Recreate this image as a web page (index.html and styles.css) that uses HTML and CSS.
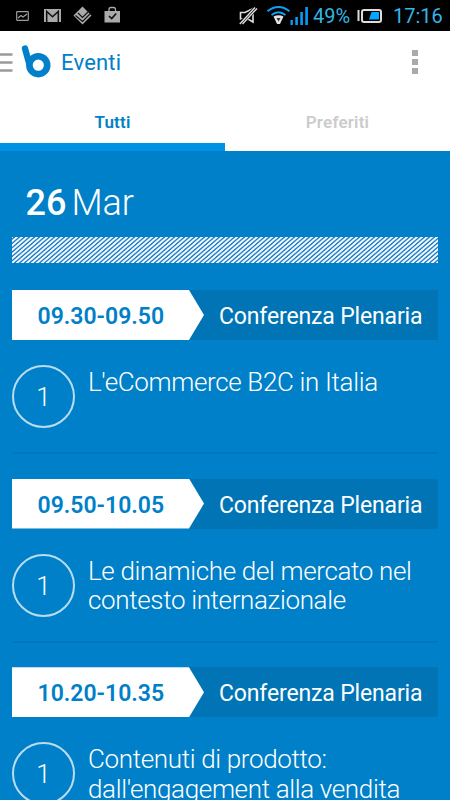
FILE: index.html
```
<!DOCTYPE html>
<html lang="it">
<head>
<meta charset="utf-8">
<title>Eventi</title>
<link rel="stylesheet" href="styles.css">
</head>
<body>
<div class="status">
  <svg class="status-left" width="125" height="31" viewBox="0 0 125 31">
    <g fill="none" stroke="#9d9d9d">
      <rect x="16.7" y="11.7" width="11.6" height="8.600" rx=".5" stroke-width="1.200"/>
      <path d="M18 18l3-2.500 2 1.500 4-3" stroke-width="1.300"/>
    </g>
    <path fill="#aaa" d="M44 9h17v13H44z"/>
    <path d="M46.700 22V11.500l5.800 5.200 5.800-5.200V22" fill="none" stroke="#111" stroke-width="1.500"/>
    <path fill="#aaa" d="M82.500 6.500l9 9-9 9-9-9z"/>
    <path d="M78 13l4.500 4.500L89.500 10.500M75.500 15.500l7 6L90 14" fill="none" stroke="#111" stroke-width="1.200"/>
    <path fill="#aaa" d="M104.500 11h15.500v11.500h-15.500z"/>
    <path d="M109 11V9.500q0-2 2-2h2.500q2 0 2 2V11" fill="none" stroke="#aaa" stroke-width="1.300"/>
    <path d="M109 16l2.700 2.500 4.500-5" fill="none" stroke="#111" stroke-width="1.700"/>
  </svg>
  <div class="status-right">
    <svg width="72" height="31" viewBox="238 0 72 31">
      <path d="M240.500 12.500h4.500l8-4v13.500l-5-3h-7.500z" fill="none" stroke="#ddd" stroke-width="1.600"/>
      <path d="M240 24.500L256.500 7.500" stroke="#000" stroke-width="5"/>
      <path d="M239.800 24L255 7.500M242.500 24L257 8.500" stroke="#ddd" stroke-width="1.400"/>
      <path d="M267.500 11.300q11-8.500 22 0M271.500 15q7-5.500 14 0" fill="none" stroke="#0aa0f5" stroke-width="2"/>
      <path d="M273.500 16.500q5-2.500 10 0l-3.500 7.500h-3z" fill="#e2e2e2"/>
      <path d="M276.500 18h4l-2 3.500z" fill="#333"/>
      <path d="M290.500 20h2.400v5h-2.400zM295.300 17h2.600v8h-2.600zM300.300 12h2.600v13h-2.600zM305.300 7h2.600v18h-2.600z" fill="#0a9cf5"/>
    </svg>
    <span class="percent">49%</span>
    <svg width="26" height="31" viewBox="357 0 26 31">
      <path d="M358.500 10v11" stroke="#ddd" stroke-width="2"/>
      <rect x="362" y="10" width="19" height="12" rx="2" fill="none" stroke="#ddd" stroke-width="2"/>
      <path d="M371.500 12h7.500v7.500h-10z" fill="#00a8ff"/>
    </svg>
    <span class="clock">17:16</span>
  </div>
</div>
<header class="bar">
  <svg class="brand" width="54" height="62" viewBox="0 31 54 62">
    <path d="M0 54.500h12.500M0 62.500h12.500M0 70.500h12.500" stroke="#999" stroke-width="2.600"/>
    <path d="M25 48.500L29 63" stroke="#0080c8" stroke-width="6.400" stroke-linecap="round"/>
    <circle cx="38.300" cy="65.200" r="8.900" fill="none" stroke="#0080c8" stroke-width="6.600"/>
  </svg>
  <h1 class="title">Eventi</h1>
  <div class="more"><i></i><i></i><i></i></div>
</header>
<nav class="tabs">
  <div class="tab active">Tutti</div>
  <div class="tab">Preferiti</div>
</nav>
<main class="agenda">
  <h2 class="date"><b>26</b><span>Mar</span></h2>
  <svg class="hatch" width="426" height="26">
    <defs><pattern id="stripes" width="5" height="4.333" patternUnits="userSpaceOnUse">
      <path d="M-5 4.333L5 -4.333M-5 8.667L10 -4.333M0 8.667L10 0" stroke="#fff" stroke-width="1.950"/>
    </pattern></defs>
    <rect width="426" height="26" fill="#0871c5"/>
    <rect width="426" height="26" fill="url(#stripes)"/>
  </svg>
  <section class="session">
    <div class="head"><div class="time">09.30-09.50</div><div class="kind">Conferenza Plenaria</div></div>
    <div class="talk"><div class="num">1</div><p>L'eCommerce B2C in Italia</p></div>
  </section>
  <section class="session">
    <div class="head"><div class="time">09.50-10.05</div><div class="kind">Conferenza Plenaria</div></div>
    <div class="talk"><div class="num">1</div><p>Le dinamiche del mercato nel<br>contesto internazionale</p></div>
  </section>
  <section class="session">
    <div class="head"><div class="time">10.20-10.35</div><div class="kind">Conferenza Plenaria</div></div>
    <div class="talk"><div class="num">1</div><p>Contenuti di prodotto:<br>dall'engagement alla vendita</p></div>
  </section>
</main>
</body>
</html>
```
FILE: styles.css
```
* { box-sizing: border-box; margin: 0; padding: 0; }
body {
  width: 450px;
  height: 800px;
  overflow: hidden;
  display: flex;
  flex-direction: column;
  background: #fff;
  font-family: Roboto, "Liberation Sans", sans-serif;
}
svg { display: block; flex: none; }
.status {
  height: 31px;
  flex: none;
  display: flex;
  justify-content: space-between;
  background: #000;
  color: #33b5e5;
  font-size: 20px;
  line-height: 32px;
}
.status-right { display: flex; width: 212px; }
.percent { width: 47px; padding-left: 3px; white-space: nowrap; }
.clock { padding-left: 10px; font-size: 20px; white-space: nowrap; }
.bar { height: 62px; flex: none; display: flex; align-items: center; }
.title {
  flex: 1;
  padding-left: 7px;
  color: #0080c8;
  font-size: 22px;
  font-weight: 400;
  letter-spacing: .2px;
}
.more { display: grid; gap: 3px; margin-right: 32px; }
.more i { width: 6px; height: 6px; background: #aaa; }
.tabs { height: 58px; flex: none; display: flex; }
.tab {
  width: 225px;
  border-bottom: 0 solid #0092e2;
  color: #ccc;
  font-size: 17px;
  font-weight: 600;
  letter-spacing: .2px;
  line-height: 59px;
  text-align: center;
}
.tab.active { color: #0080c8; border-bottom-width: 8px; }
.agenda { flex: 1; padding: 27px 12px 0; background: #0080c8; color: #fff; overflow: hidden; }
.date {
  display: flex;
  gap: 5px;
  height: 59px;
  padding-left: 13.500px;
  font-size: 36px;
  line-height: 50px;
  font-weight: 300;
}
.date b { font-weight: 500; }
.hatch { margin-bottom: 27px; }
.session { height: 188.600px; }
.head { display: flex; height: 50px; background: #0074b4; }
.time {
  width: 192px;
  padding-left: 25.500px;
  background: #fff;
  clip-path: polygon(0 0, 177px 0, 100% 50%, 177px 100%, 0 100%);
  color: #0080c8;
  font-size: 23px;
  font-weight: 600;
  letter-spacing: 0;
  line-height: 53px;
  white-space: nowrap;
}
.kind { padding-left: 15px; font-size: 23px; font-weight: 450; letter-spacing: -.15px; line-height: 53px; white-space: nowrap; }
.talk { display: flex; gap: 13px; height: 114px; padding-top: 25px; border-bottom: 2px solid #0077bc; }
.num {
  width: 63px;
  height: 63px;
  flex: none;
  border: 2px solid #b9dcf1;
  border-radius: 50%;
  font-size: 26px;
  font-weight: 300;
  line-height: 60px;
  text-align: center;
}
.talk p { padding-top: 3px; font-size: 26px; font-weight: 300; letter-spacing: -.35px; line-height: 29.500px; white-space: nowrap; }
```
